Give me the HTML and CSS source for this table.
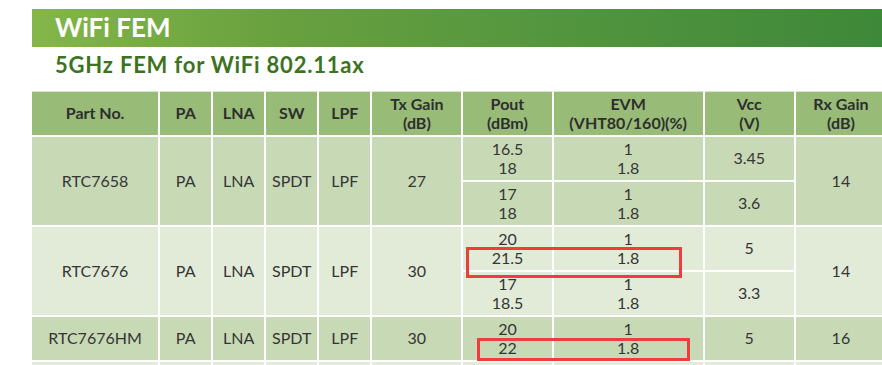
FILE: index.html
```html
<!DOCTYPE html>
<html>
<head>
<meta charset="utf-8">
<link rel="stylesheet" href="styles.css">
</head>
<body>
<div class="page">
  <div class="banner"><h1 class="banner-title">WiFi FEM</h1></div>
  <h2 class="subtitle">5GHz FEM for WiFi 802.11ax</h2>
  <div class="table-wrap">
    <table class="spec">
      <colgroup>
        <col class="c-part"><col class="c-sm"><col class="c-sm"><col class="c-sm"><col class="c-sm">
        <col class="c-tx"><col class="c-pout"><col class="c-evm"><col class="c-vcc"><col class="c-rx">
      </colgroup>
      <thead>
        <tr class="head">
          <th>Part No.</th><th>PA</th><th>LNA</th><th>SW</th><th>LPF</th>
          <th>Tx Gain<br>(dB)</th><th>Pout<br>(dBm)</th><th>EVM<br>(VHT80/160)(%)</th><th>Vcc<br>(V)</th><th>Rx Gain<br>(dB)</th>
        </tr>
      </thead>
      <tbody>
        <tr class="dark sub">
          <td rowspan="2">RTC7658</td><td rowspan="2">PA</td><td rowspan="2">LNA</td><td rowspan="2">SPDT</td><td rowspan="2">LPF</td><td rowspan="2">27</td>
          <td>16.5<br>18</td><td>1<br>1.8</td><td>3.45</td><td rowspan="2">14</td>
        </tr>
        <tr class="dark sub">
          <td>17<br>18</td><td>1<br>1.8</td><td>3.6</td>
        </tr>
        <tr class="light sub">
          <td rowspan="2">RTC7676</td><td rowspan="2">PA</td><td rowspan="2">LNA</td><td rowspan="2">SPDT</td><td rowspan="2">LPF</td><td rowspan="2">30</td>
          <td>20<br>21.5</td><td>1<br>1.8</td><td>5</td><td rowspan="2">14</td>
        </tr>
        <tr class="light sub">
          <td>17<br>18.5</td><td>1<br>1.8</td><td>3.3</td>
        </tr>
        <tr class="dark sub">
          <td>RTC7676HM</td><td>PA</td><td>LNA</td><td>SPDT</td><td>LPF</td><td>30</td>
          <td>20<br>22</td><td>1<br>1.8</td><td>5</td><td>16</td>
        </tr>
        <tr class="light sub">
          <td></td><td></td><td></td><td></td><td></td><td></td><td></td><td></td><td></td><td></td>
        </tr>
      </tbody>
    </table>
    <div class="mark mark-1"></div>
    <div class="mark mark-2"></div>
  </div>
</div>
</body>
</html>
```

FILE: styles.css
```css
html, body {
  margin: 0;
  padding: 0;
  background: #ffffff;
  overflow: hidden;
}
body {
  width: 882px;
  height: 365px;
  font-family: Lato, "Open Sans", "Liberation Sans", sans-serif;
}
.page {
  padding: 9px 0 0 32px;
}
.banner {
  height: 38px;
  background: linear-gradient(to right, #84b648 0%, #68a03f 30%, #54963f 60%, #3e8839 100%);
  padding-left: 23px;
  display: flex;
  align-items: center;
}
.banner-title {
  margin: 0;
  color: #ffffff;
  font-size: 26px;
  font-weight: 700;
  line-height: 38px;
  position: relative;
  top: -1px;
}
.subtitle {
  margin: 6px 0 0;
  padding-left: 23px;
  color: #3c7321;
  font-size: 22px;
  font-weight: 700;
  letter-spacing: 0.8px;
  line-height: 24px;
  height: 38px;
}
.table-wrap {
  position: relative;
  width: 860px;
}
.spec {
  border-collapse: separate;
  border-spacing: 0;
  table-layout: fixed;
  width: 856px;
  color: #353535;
  font-size: 16px;
}
.c-part { width: 128px; }
.c-sm { width: 53px; }
.c-tx { width: 91px; }
.c-pout { width: 90px; }
.c-evm { width: 151px; }
.c-vcc { width: 91px; }
.c-rx { width: 92px; }
.spec th, .spec td {
  padding: 0;
  text-align: center;
  vertical-align: middle;
  border-right: 2px solid #ffffff;
  border-bottom: 2px solid #ffffff;
  line-height: 18.5px;
  box-sizing: border-box;
}
.spec th {
  font-weight: 700;
  color: #2e2e2e;
  background: #98bb77;
  border-top: 1px solid #d8e6cb;
}
.head { height: 46px; }
.sub { height: 45px; }
.dark td { background: #c8dab5; }
.light td { background: #e2ebd8; }
.mark {
  position: absolute;
  border: 3px solid #f03c3c;
  box-sizing: border-box;
}
.mark-1 {
  left: 434px;
  top: 156px;
  width: 216px;
  height: 31px;
}
.mark-2 {
  left: 445px;
  top: 247px;
  width: 213px;
  height: 23px;
}
```
